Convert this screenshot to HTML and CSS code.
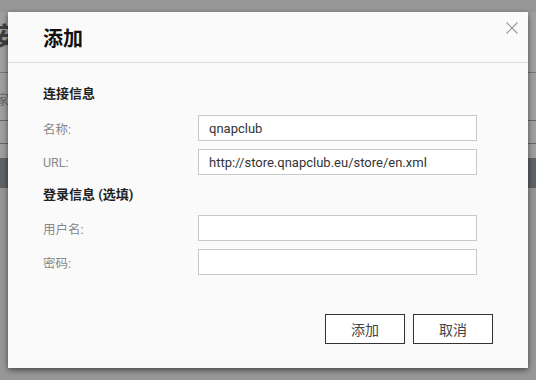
FILE: index.html
```html
<!DOCTYPE html>
<html lang="zh-CN">
<head>
    <meta charset="UTF-8">
    <meta name="viewport" content="width=device-width, initial-scale=1.0">
    <title>添加</title>
    <link rel="stylesheet" href="styles.css">
</head>
<body>
    <div class="app">
        <div class="app-head">安装</div>
        <div class="app-row">家用</div>
        <div class="app-row small"></div>
        <div class="app-band"></div>
    </div>
    <div class="mask"></div>

    <div class="dialog">
        <div class="dialog-head">
            <h1>添加</h1>
            <span class="close">
                <svg width="12" height="12" viewBox="0 0 12 12"><path d="M0.5 0.5 L11.5 11.5 M11.5 0.5 L0.5 11.5" stroke="#9a9a9a" stroke-width="1.2" fill="none"/></svg>
            </span>
        </div>
        <div class="dialog-body">
            <h2>连接信息</h2>
            <div class="row">
                <label>名称:</label>
                <input type="text" value="qnapclub">
            </div>
            <div class="row">
                <label>URL:</label>
                <input type="text" value="http://store.qnapclub.eu/store/en.xml">
            </div>
            <h2 class="second">登录信息 (选填)</h2>
            <div class="row">
                <label>用户名:</label>
                <input type="text">
            </div>
            <div class="row">
                <label>密码:</label>
                <input type="password">
            </div>
        </div>
        <div class="dialog-foot">
            <button>添加</button>
            <button>取消</button>
        </div>
    </div>
</body>
</html>
```

FILE: styles.css
```css
body {
    margin: 0;
    padding: 0;
    width: 536px;
    height: 380px;
    overflow: hidden;
    background-color: #979797;
    font-family: Roboto, "Noto Sans CJK SC", sans-serif;
    position: relative;
}

.app {
    margin-top: 12px;
    background-color: #a3a3a3;
}

.app-head {
    height: 60px;
    font-size: 26px;
    font-weight: bold;
    color: #222;
    line-height: 50px;
    margin-left: -8px;
    border-bottom: 1px solid #6a6a6a;
}

.app-row {
    height: 47px;
    line-height: 54px;
    font-size: 13px;
    color: #555;
    margin-left: -4px;
    border-bottom: 1px solid #555;
}

.app-row.small {
    height: 22px;
    margin-left: 0;
}

.app-band {
    height: 30px;
    margin-top: 14px;
    background-color: #4c5159;
}

.mask {
    position: absolute;
    top: 0;
    left: 0;
    right: 0;
    bottom: 0;
    background-color: rgba(150, 150, 150, 0.25);
}

.dialog {
    position: absolute;
    top: 12px;
    left: 8px;
    width: 520px;
    height: 356px;
    background-color: #fafafa;
    box-shadow: 0 2px 6px rgba(0, 0, 0, 0.55);
    display: flex;
    flex-direction: column;
}

.dialog-head {
    height: 50px;
    border-bottom: 1px solid #dcdcdc;
    padding: 0 35px;
    display: flex;
    align-items: center;
    position: relative;
}

.dialog-head h1 {
    margin: 0;
    font-size: 20px;
    font-weight: bold;
    color: #111;
}

.close {
    position: absolute;
    top: 10px;
    right: 10px;
    line-height: 0;
}

.dialog-body {
    padding: 22px 51px 0 35px;
}

.dialog-body h2 {
    margin: 0 0 12px 0;
    font-size: 13px;
    font-weight: bold;
    color: #222;
    line-height: 18px;
}

.dialog-body h2.second {
    margin-top: 11px;
    margin-bottom: 11px;
}

.row {
    display: flex;
    align-items: center;
    margin-bottom: 8px;
}

.row label {
    width: 155px;
    font-size: 12.5px;
    color: #888;
}

.row input {
    width: 279px;
    height: 26px;
    box-sizing: border-box;
    border: 1px solid #c8c8c8;
    background-color: #fff;
    padding: 0 10px;
    font-family: Roboto, "Noto Sans CJK SC", sans-serif;
    font-size: 13px;
    color: #333;
    outline: none;
}

.dialog-foot {
    margin-top: auto;
    padding: 0 35px 24px 0;
    display: flex;
    justify-content: flex-end;
    gap: 8px;
}

.dialog-foot button {
    width: 80px;
    height: 30px;
    border: 1px solid #333;
    background-color: #fff;
    font-family: Roboto, "Noto Sans CJK SC", sans-serif;
    font-size: 14px;
    color: #444;
    padding: 0;
}
```
